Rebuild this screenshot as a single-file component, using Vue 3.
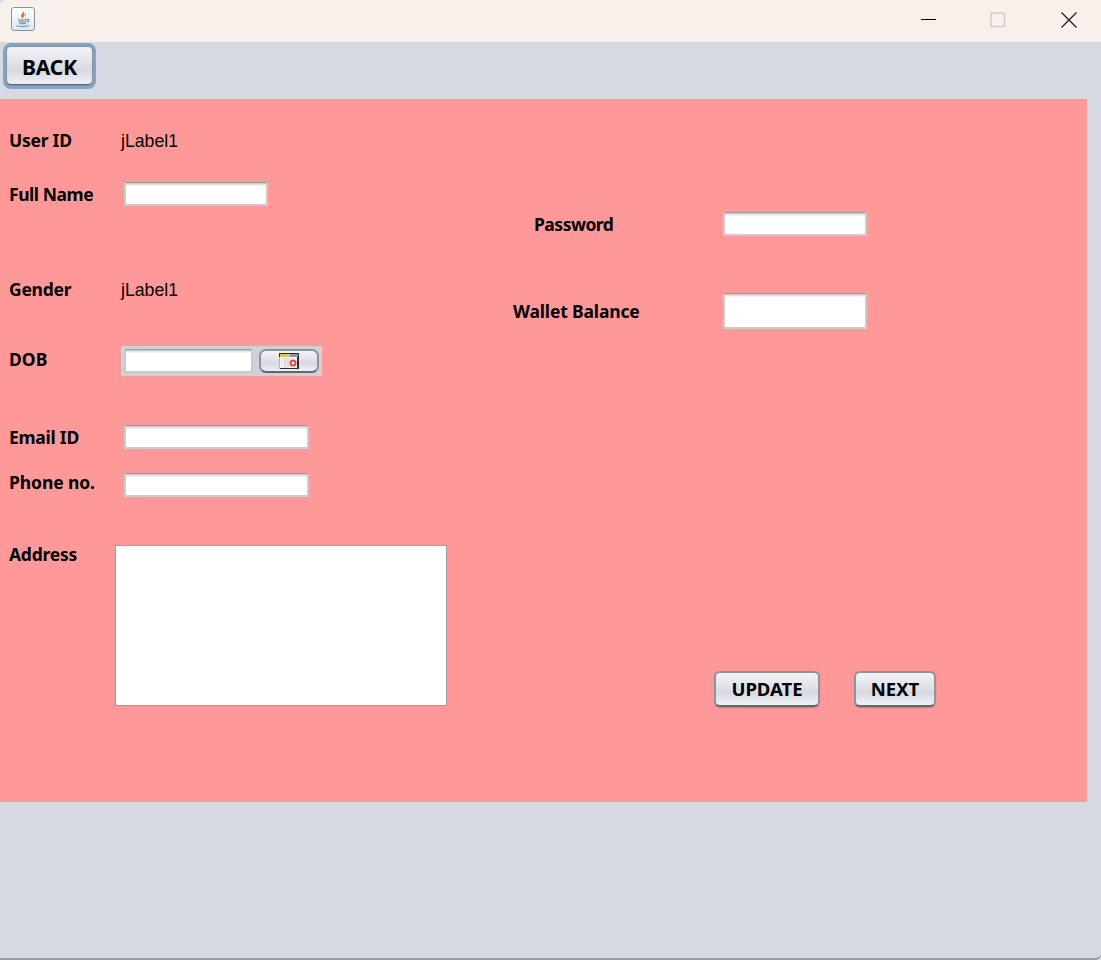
<script setup>
</script>

<template>
  <div class="window">
    <header class="titlebar">
      <span class="app-icon">
        <svg width="22" height="22" viewBox="0 0 22 22">
          <path d="M11 2.500c1.300 2-2.600 3.500-1.800 5.800.3.900 1.200 1.800 1.700 3-.1-1.700.6-2.600 1.700-3.500 1.200-1 2-2 1.100-3.100.2 1.200-1.200 1.900-1.900 2.800C12.400 6 12.200 4 11 2.500z" fill="#e8722a" />
          <path d="M6 11.500c2.500.7 7 .7 9 0M6.500 13.500c2.200.6 6 .6 8 0M7.500 15.500c2 .5 4.500.5 6.500 0M15 11.500c2.300-.7 3 1.800.2 2.800" fill="none" stroke="#6a86a0" stroke-width="1.100" />
          <path d="M4 17.800c3.500 1.100 10 1.100 13.500-.3" fill="none" stroke="#7f98ae" stroke-width="1.100" />
        </svg>
      </span>
      <div class="controls">
        <svg class="ctl ctl-min" width="16" height="16" viewBox="0 0 16 16"><path d="M0 7.500h15" stroke="#000" stroke-width="1" /></svg>
        <svg class="ctl ctl-max" width="16" height="16" viewBox="0 0 16 16"><rect x="1" y="1" width="13.500" height="13.500" rx="1.500" fill="none" stroke="#cfcbc8" stroke-width="1.500" /></svg>
        <svg class="ctl ctl-close" width="16" height="16" viewBox="0 0 16 16"><path d="M.5.500l15 15M15.500.500l-15 15" stroke="#1a1a1a" stroke-width="1.200" /></svg>
      </div>
    </header>

    <div class="toolbar">
      <button class="btn back">BACK</button>
    </div>

    <main class="panel">
      <section class="col-left">
        <div class="row row-id">
          <span class="label">User ID</span>
          <span class="value">jLabel1</span>
        </div>
        <div class="row row-name">
          <span class="label">Full Name</span>
          <input class="field f-name" />
        </div>
        <div class="row row-gender">
          <span class="label">Gender</span>
          <span class="value">jLabel1</span>
        </div>
        <div class="row row-dob">
          <span class="label">DOB</span>
          <div class="date">
            <input class="field f-date" />
            <button class="btn cal">
              <svg width="20" height="16" viewBox="0 0 20 16">
                <rect x="0" y="0" width="20" height="16" fill="#2b2b2b" />
                <rect x="0" y="4" width="1" height="12" fill="#b5b5b5" />
                <rect x="1" y="1" width="10" height="3" fill="#e9c35a" />
                <rect x="11" y="1" width="8" height="3" fill="#8a94a6" />
                <rect x="1" y="4" width="17" height="11" fill="#f1eeee" />
                <path d="M6 5v9M9 5v9" stroke="#c4c4c4" stroke-width="1" />
                <circle cx="14" cy="10" r="2.500" fill="none" stroke="#e0454b" stroke-width="2" />
              </svg>
            </button>
          </div>
        </div>
        <div class="row row-email">
          <span class="label">Email ID</span>
          <input class="field f-wide" />
        </div>
        <div class="row row-phone">
          <span class="label">Phone no.</span>
          <input class="field f-wide" />
        </div>
        <div class="row row-address">
          <span class="label">Address</span>
          <textarea class="address"></textarea>
        </div>
      </section>

      <section class="col-right">
        <div class="rrow row-pass">
          <span class="label rlabel pass-label">Password</span>
          <input class="field f-right" />
        </div>
        <div class="rrow row-wallet">
          <span class="label rlabel wallet-label">Wallet Balance</span>
          <input class="field f-right f-tall" />
        </div>
        <div class="actions">
          <button class="btn act update">UPDATE</button>
          <button class="btn act next">NEXT</button>
        </div>
      </section>
    </main>
  </div>
</template>

<style>
html, body { margin: 0; padding: 0; background: #d6d9e2; }
</style>

<style scoped>
.window {
  width: 1101px;
  height: 960px;
  background: #d6d9e2;
  font-family: "Noto Sans", "Open Sans", sans-serif;
  color: #000;
  overflow: hidden;
  border-bottom-right-radius: 6px;
  box-sizing: border-box;
  border-bottom: 2px solid #9a9a9a;
}
.titlebar {
  height: 42px;
  background: #f9f0ec;
  display: flex;
  align-items: center;
  justify-content: space-between;
  box-sizing: border-box;
  padding-left: 11px;
  border-top-left-radius: 6px;
}
.app-icon {
  width: 24px;
  height: 24px;
  box-sizing: border-box;
  margin-top: -4px;
  border: 1px solid #7f94a8;
  border-radius: 3px;
  background: linear-gradient(#ffffff, #dfe6ee);
  display: flex;
  align-items: center;
  justify-content: center;
}
.controls {
  display: flex;
  align-items: center;
  margin-right: 24px;
  margin-top: -3px;
}
.ctl-min { margin-right: 53px; }
.ctl-max { margin-right: 55px; }

.toolbar {
  height: 57px;
  box-sizing: border-box;
  padding: 1px 0 0 3px;
}
.btn {
  font-family: "Noto Sans", "Open Sans", sans-serif;
  font-weight: 700;
  color: #000;
  padding: 0;
  box-sizing: border-box;
  border: 2px solid #8f939c;
  border-bottom-color: #63676f;
  border-radius: 6px;
  background: linear-gradient(#f3f4f7 0%, #e6e8ee 30%, #d6d9e1 62%, #e4e7ee 82%, #f0f2f8 100%);
  box-shadow: 0 1px 1px rgba(70, 70, 80, 0.35);
}
.back {
  width: 93px;
  height: 46px;
  font-size: 21px;
  padding-top: 2px;
  letter-spacing: -0.100px;
  border: 3px solid #7ea6cc;
  border-radius: 8px;
  box-shadow: inset 0 0 0 1px #8d919b, inset 0 -1px 0 1px #5f636d;
}

.panel {
  width: 1087px;
  height: 703px;
  background: #ff9999;
  display: flex;
}
.col-left {
  width: 513px;
  box-sizing: border-box;
  padding-left: 9px;
}
.col-right { flex: 1; }

.row { display: flex; align-items: center; height: 24px; }
.row-id { margin-top: 30px; }
.row-name { margin-top: 29px; }
.row-gender { margin-top: 72px; }
.row-dob { margin-top: 44px; height: 30px; }
.row-email { margin-top: 49px; }
.row-phone { margin-top: 24px; }
.row-address { margin-top: 48px; height: 161px; align-items: flex-start; }

.label {
  font-size: 17.500px;
  font-weight: 700;
  line-height: 24px;
  letter-spacing: -0.250px;
  white-space: nowrap;
}
.row .label { width: 115px; flex: none; }
.row-id .label, .row-gender .label { margin-bottom: 2px; }
.row-name .label { letter-spacing: -0.450px; }
.row-address .label { width: 106px; margin-top: -3px; }
.row-phone .label { margin-top: -6px; letter-spacing: -0.100px; }
.row-dob .label { margin-top: -4px; letter-spacing: 0; }
.value {
  font-family: "Liberation Sans", Arial, sans-serif;
  font-size: 17.700px;
  margin-left: -3px;
}

.field {
  display: block;
  height: 24px;
  box-sizing: border-box;
  border: 2px solid #cbcbcb;
  border-top: 1px solid #9a9a9a;
  background: #fff;
  margin: 0;
  padding: 0;
  outline: none;
  box-shadow: inset 0 1px 0 #cdcdcd, inset 0 2px 0 #e2e2e2, inset 0 3px 0 #f2f2f2;
}
.f-name { width: 144px; }
.f-wide { width: 185px; }
.f-date { width: 129px; }
.f-right { width: 144px; }
.f-tall { height: 36px; }

.date {
  margin-left: -3px;
  width: 201px;
  height: 30px;
  box-sizing: border-box;
  background: #ced1da;
  display: flex;
  align-items: center;
  gap: 6px;
  padding-left: 3px;
}
.cal {
  width: 60px;
  height: 24px;
  display: flex;
  align-items: center;
  justify-content: center;
  border-radius: 7px;
  box-shadow: none;
}

.rrow { display: flex; align-items: center; }
.rlabel { width: 210px; flex: none; }
.pass-label { padding-left: 21px; box-sizing: border-box; letter-spacing: -0.500px; }
.wallet-label { letter-spacing: -0.150px; }
.row-pass { margin-top: 113px; height: 24px; }
.row-wallet { margin-top: 57px; height: 36px; }
.actions {
  margin-top: 342px;
  padding-left: 201px;
  display: flex;
  gap: 34px;
}
.act { height: 36px; font-size: 18.500px; letter-spacing: 0; padding-bottom: 2px; }
.update { width: 106px; }
.next { width: 82px; }

.address {
  display: block;
  width: 332px;
  height: 161px;
  box-sizing: border-box;
  border: 1px solid #9c9ca4;
  background: #fff;
  margin: 0;
  padding: 0;
  outline: none;
  resize: none;
}
</style>
